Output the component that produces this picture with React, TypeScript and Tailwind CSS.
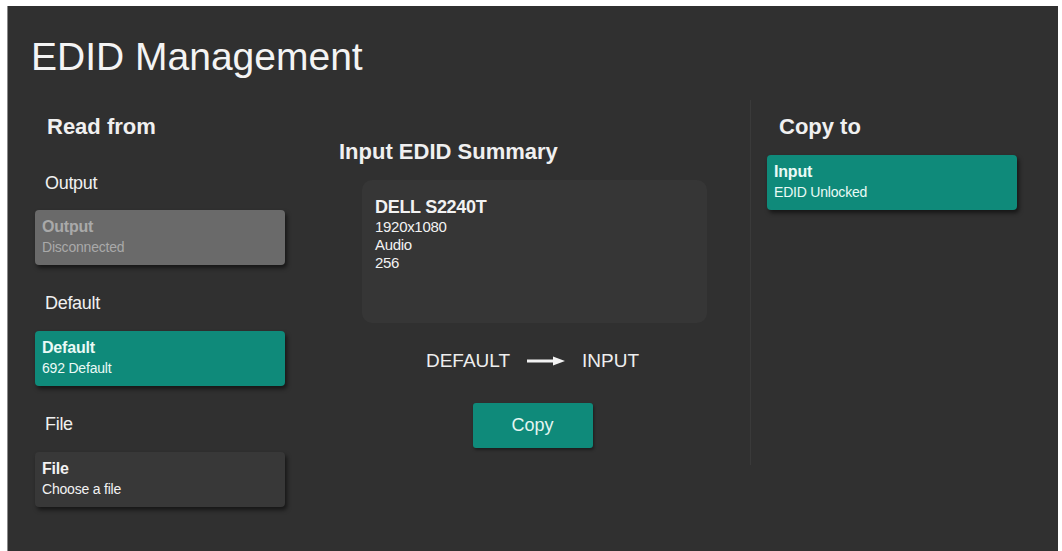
import React from "react";

type CardProps = {
  title: string;
  subtitle: string;
  tone: "teal" | "muted" | "dark";
};

function SourceCard({ title, subtitle, tone }: CardProps) {
  const toneClass =
    tone === "teal"
      ? "bg-[#0f8a7a] text-[#eafaf6]"
      : tone === "muted"
      ? "bg-[#6a6a6a] text-[#a9a9a9]"
      : "bg-[#383838] text-[#f2f2f2]";
  return (
    <div
      className={`w-[250px] h-[55px] rounded-[4px] pl-[7px] pt-[7px] shadow-[2px_3px_4px_rgba(0,0,0,0.55)] ${toneClass}`}
    >
      <div className="text-[16px] leading-5 font-bold tracking-[-0.2px]">{title}</div>
      <div className="text-[14px] leading-5 tracking-[-0.2px]">{subtitle}</div>
    </div>
  );
}

function GroupLabel({ children }: { children: React.ReactNode }) {
  return (
    <div className="ml-[10px] text-[18px] leading-6 text-[#f0f0f0] tracking-[-0.3px]">
      {children}
    </div>
  );
}

function Arrow() {
  return (
    <svg width="38" height="10" viewBox="0 0 38 10" className="block">
      <rect x="0" y="3.5" width="28" height="3" fill="#f2f2f2" />
      <polygon points="26,0.5 38,5 26,9.5" fill="#f2f2f2" />
    </svg>
  );
}

export default function App() {
  return (
    <div
      className="w-[1062px] h-[551px] bg-white pl-[7px] pt-[6px] pr-[4px] flex overflow-hidden"
      style={{ fontFamily: '"Liberation Sans", Arial, sans-serif' }}
    >
      <div className="flex-1 bg-[#303030] border-l border-[#8a8a8a] flex flex-col">
        <h1 className="pl-[23px] pt-[31px] text-[39px] leading-[39px] text-[#f4f4f4] font-normal">
          EDID Management
        </h1>

        <div className="flex">
          {/* Read from */}
          <div className="ml-[27px] w-[250px] flex flex-col">
            <div className="mt-[38px] ml-[12px] text-[22px] leading-[26px] font-bold text-[#f0f0f0]">
              Read from
            </div>

            <div className="mt-[31px]">
              <GroupLabel>Output</GroupLabel>
            </div>
            <div className="mt-[15px]">
              <SourceCard title="Output" subtitle="Disconnected" tone="muted" />
            </div>

            <div className="mt-[26px]">
              <GroupLabel>Default</GroupLabel>
            </div>
            <div className="mt-[16px]">
              <SourceCard title="Default" subtitle="692 Default" tone="teal" />
            </div>

            <div className="mt-[26px]">
              <GroupLabel>File</GroupLabel>
            </div>
            <div className="mt-[16px]">
              <SourceCard title="File" subtitle="Choose a file" tone="dark" />
            </div>
          </div>

          {/* Summary */}
          <div className="ml-[30px] w-[435px] flex flex-col">
            <div className="mt-[63px] pl-[24px] text-[22px] leading-[26px] font-bold text-[#f0f0f0]">
              Input EDID Summary
            </div>
            <div className="mt-[15px] ml-[47px] w-[345px] h-[143px] rounded-[10px] bg-[#363636] pl-[13px] pt-[16px] text-[#f2f2f2]">
              <div className="text-[18px] leading-[22px] font-bold tracking-[-0.3px]">DELL S2240T</div>
              <div className="text-[15px] leading-[18px] tracking-[-0.3px]">1920x1080</div>
              <div className="text-[15px] leading-[18px] tracking-[-0.3px]">Audio</div>
              <div className="text-[15px] leading-[18px] tracking-[-0.3px]">256</div>
            </div>
            <div className="mt-[26px] h-6 flex items-center justify-center gap-[17px] text-[19px] leading-6 text-[#eeeeee]">
              <span>DEFAULT</span>
              <Arrow />
              <span>INPUT</span>
            </div>
            <div className="mt-[30px] flex justify-center">
              <button className="w-[120px] h-[45px] rounded-[3px] bg-[#0f8a7a] text-[18px] text-[#e4f6f1] shadow-[1px_2px_3px_rgba(0,0,0,0.4)]">
                Copy
              </button>
            </div>
          </div>

          {/* Copy to */}
          <div className="mt-[24px] h-[365px] border-l border-[#3a3a3a] pl-[16px] flex flex-col">
            <div className="mt-[14px] ml-[12px] text-[22px] leading-[26px] font-bold text-[#f0f0f0]">
              Copy to
            </div>
            <div className="mt-[15px]">
              <SourceCard title="Input" subtitle="EDID Unlocked" tone="teal" />
            </div>
          </div>
        </div>
      </div>
    </div>
  );
}
